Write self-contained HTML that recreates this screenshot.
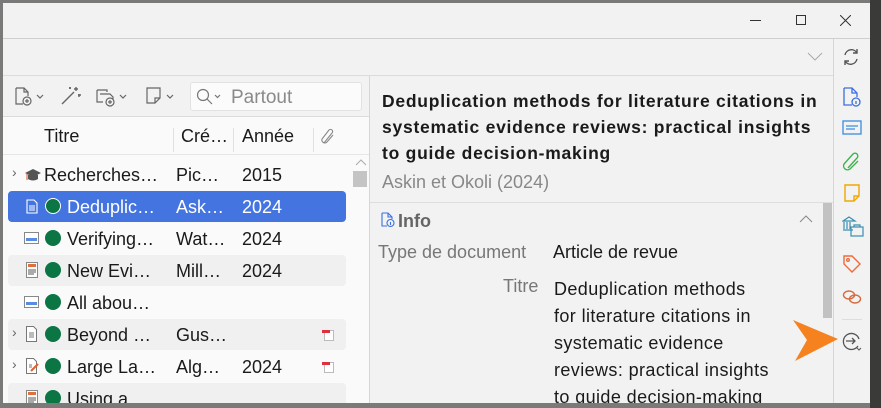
<!DOCTYPE html>
<html><head><meta charset="utf-8"><style>
*{margin:0;padding:0;box-sizing:border-box}
html,body{width:881px;height:408px;overflow:hidden}
body{background:#7a7a78;font-family:"Liberation Sans",sans-serif;position:relative}
.a{position:absolute}
.win{position:absolute;left:3px;top:3px;width:867px;height:400px;background:#f2f2f2}
.t{position:absolute;white-space:nowrap;font-size:18px;color:#1a1a1a}
.row{position:absolute;left:8px;width:338px;height:31px;border-radius:4px}
.dot{position:absolute;width:16px;height:16px;border-radius:50%;background:#0b7544}
</style></head><body>
<div class="win"></div>
<div class="a" style="left:750px;top:20px;width:11px;height:1px;background:#333"></div>
<div class="a" style="left:796px;top:15px;width:10px;height:10px;border:1px solid #333"></div>
<svg class="a" style="left:840px;top:15px" width="11" height="11"><path d="M0 0L11 11M11 0L0 11" stroke="#333" stroke-width="1"/></svg>
<div class="a" style="left:3px;top:38px;width:867px;height:1px;background:#cfcfcf"></div>
<div class="a" style="left:3px;top:75px;width:830px;height:1px;background:#dcdcdc"></div>
<svg class="a" style="left:807px;top:52px" width="16" height="10"><path d="M1 1L8 8L15 1" stroke="#aaa" fill="none"/></svg>
<div class="a" style="left:833px;top:39px;width:1px;height:364px;background:#d6d6d6"></div>
<svg class="a" style="left:841px;top:47px" width="20" height="20" fill="none" stroke="#555" stroke-width="1.4"><path d="M4 8a6.5 6.5 0 0 1 12-2M16 2v4h-4M16 12a6.5 6.5 0 0 1-12 2M4 18v-4h4"/></svg>
<svg class="a" style="left:843px;top:87px" width="18" height="20" fill="none" stroke="#3b6fe0" stroke-width="1.3"><path d="M1 1h8l5 5v4M1 1v17h8M9 1v5h5"/><circle cx="13" cy="15" r="4"/><path d="M13 14v3"/></svg>
<svg class="a" style="left:842px;top:120px" width="20" height="16" fill="none" stroke="#3b8be0" stroke-width="1.3"><rect x="1" y="1" width="18" height="13"/><path d="M4 6h12M4 9h9"/></svg>
<svg class="a" style="left:842px;top:152px" width="20" height="20" fill="none" stroke="#3fb34f" stroke-width="1.4"><path d="M6 16L15 6a2.5 2.5 0 0 0-4-4L2 12a4 4 0 0 0 6 5l8-8"/></svg>
<svg class="a" style="left:844px;top:184px" width="16" height="18" fill="none" stroke="#f0a800" stroke-width="1.4"><path d="M1 1h14v11l-5 5H1z"/><path d="M10 17v-5h5"/></svg>
<svg class="a" style="left:842px;top:215px" width="22" height="22" fill="none" stroke="#3a8fb0" stroke-width="1.2"><path d="M1 6l6-4 6 4zM2 7v7M5 7v7M8 7v7M1 15h10"/><rect x="9" y="12" width="12" height="9"/><path d="M12 12v-2h6v2"/></svg>
<svg class="a" style="left:842px;top:254px" width="20" height="20" fill="none" stroke="#ef6a3b" stroke-width="1.4"><path d="M2 2h8l8 8-8 8-8-8z"/><circle cx="6" cy="6" r="1.3"/></svg>
<svg class="a" style="left:842px;top:289px" width="20" height="16" fill="none" stroke="#d66a3e" stroke-width="1.4"><ellipse cx="7" cy="6" rx="5.5" ry="4"/><ellipse cx="13" cy="10" rx="5.5" ry="4"/></svg>
<div class="a" style="left:842px;top:319px;width:20px;height:1px;background:#ddd"></div>
<svg class="a" style="left:841px;top:330px" width="22" height="22" fill="none" stroke="#555" stroke-width="1.3"><path d="M17 16a8 8 0 1 1 1-7"/><path d="M5 11h9M11 8l3 3-3 3"/><path d="M16 18l2 2 2-2" stroke-width="1"/></svg>
<div class="a" style="left:369px;top:76px;width:1px;height:327px;background:#d6d6d6"></div>
<div class="a" style="left:3px;top:76px;width:366px;height:327px;background:#fafafa"></div>
<div class="a" style="left:3px;top:76px;width:366px;height:40px;background:#f2f2f2"></div>
<div class="a" style="left:3px;top:116px;width:366px;height:1px;background:#dcdcdc"></div>
<div class="a" style="left:3px;top:154px;width:366px;height:1px;background:#e6e6e6"></div>
<svg class="a" style="left:14px;top:86px" width="32" height="22" fill="none" stroke="#666" stroke-width="1.2"><path d="M2 2h8l4 4v4M2 2v16h7M10 2v4h4"/><circle cx="13" cy="15" r="4"/><path d="M13 13v4M11 15h4"/><path d="M23 9l3 3 3-3"/></svg>
<svg class="a" style="left:60px;top:85px" width="22" height="22" fill="none" stroke="#666" stroke-width="1.4"><path d="M2 19L14 7"/><path d="M16 2v4M14 4h4M19 9v3M18 10h3M10 2v2M9 3h2"/></svg>
<svg class="a" style="left:95px;top:86px" width="34" height="22" fill="none" stroke="#666" stroke-width="1.2"><path d="M2 4h10v2M2 4v12h6M5 8h10l3 3v2"/><circle cx="15" cy="16" r="4"/><path d="M15 14v4M13 16h4"/><path d="M25 9l3 3 3-3"/></svg>
<svg class="a" style="left:145px;top:86px" width="32" height="22" fill="none" stroke="#666" stroke-width="1.2"><path d="M2 2h13v10l-5 5H2z"/><path d="M10 17v-5h5"/><path d="M22 9l3 3 3-3"/></svg>
<div class="a" style="left:190px;top:82px;width:172px;height:29px;background:#fbfbfb;border:1px solid #e2e2e2;border-radius:3px"></div>
<svg class="a" style="left:196px;top:88px" width="28" height="18" fill="none" stroke="#777" stroke-width="1.2"><circle cx="7" cy="7" r="5.5"/><path d="M11 11l5 5M19 7l2.5 2.5 2.5-2.5"/></svg>
<div class="t" style="left:231px;top:87px;color:#8a8a8a;font-size:19px">Partout</div>
<div class="t" style="left:44px;top:126px">Titre</div>
<div class="a" style="left:173px;top:128px;width:1px;height:24px;background:#e0e0e0"></div>
<div class="t" style="left:181px;top:126px">Cré…</div>
<div class="a" style="left:233px;top:128px;width:1px;height:24px;background:#e0e0e0"></div>
<div class="t" style="left:242px;top:126px">Année</div>
<div class="a" style="left:313px;top:128px;width:1px;height:24px;background:#e0e0e0"></div>
<svg class="a" style="left:320px;top:128px" width="16" height="18" fill="none" stroke="#888" stroke-width="1.1"><path d="M4 15L12 5a2 2 0 0 0-3-3L2 11a3 3 0 0 0 5 3l6-7"/></svg>
<svg class="a" style="left:355px;top:158px" width="12" height="8"><path d="M1 7l5-5 5 5" stroke="#aaa" fill="none"/></svg>
<div class="a" style="left:353px;top:171px;width:14px;height:16px;background:#c4c4c4"></div>
<div class="row" style="top:191px;background:#4374e0"></div>
<div class="row" style="top:255px;background:#f0f0f0"></div>
<div class="row" style="top:319px;background:#f0f0f0"></div>
<div class="row" style="top:383px;background:#f0f0f0"></div>

<div class="t" style="left:12px;top:164px;color:#666;font-size:14px">›</div>
<svg class="a" style="left:24px;top:168px" width="18" height="14"><path d="M1 5L9 1l8 4-8 4z" fill="#555"/><path d="M4 7v4c3 2 7 2 10 0V7" fill="#555"/><path d="M3 6v6" stroke="#e05020"/></svg>
<div class="t" style="left:44px;top:165px">Recherches…</div><div class="t" style="left:176px;top:165px">Pic…</div><div class="t" style="left:242px;top:165px">2015</div>

<svg class="a" style="left:26px;top:199px" width="12" height="15" fill="none" stroke="#fff" stroke-width="1.1"><path d="M1 1h7l3 3v10H1zM3 7h6M3 9h6M3 11h6"/></svg>
<div class="dot" style="left:45px;top:198px;border:1.5px solid #fff"></div>
<div class="t" style="left:67px;top:197px;color:#fff">Deduplic…</div><div class="t" style="left:176px;top:197px;color:#fff">Ask…</div><div class="t" style="left:242px;top:197px;color:#fff">2024</div>

<svg class="a" style="left:24px;top:232px" width="15" height="12"><rect x=".5" y=".5" width="14" height="11" fill="#fff" stroke="#888"/><rect x="2" y="6" width="11" height="3" fill="#5a8be0"/></svg>
<div class="dot" style="left:45px;top:230px"></div>
<div class="t" style="left:67px;top:229px">Verifying…</div><div class="t" style="left:176px;top:229px">Wat…</div><div class="t" style="left:242px;top:229px">2024</div>

<svg class="a" style="left:26px;top:262px" width="12" height="16"><rect x=".5" y=".5" width="11" height="15" fill="#fff" stroke="#888"/><rect x="2" y="2" width="8" height="3" fill="#e07040"/><path d="M2 8h8M2 10h8M2 12h6" stroke="#555"/></svg>
<div class="dot" style="left:45px;top:262px"></div>
<div class="t" style="left:67px;top:261px">New Evi…</div><div class="t" style="left:176px;top:261px">Mill…</div><div class="t" style="left:242px;top:261px">2024</div>

<svg class="a" style="left:24px;top:296px" width="15" height="12"><rect x=".5" y=".5" width="14" height="11" fill="#fff" stroke="#888"/><rect x="2" y="6" width="11" height="3" fill="#5a8be0"/></svg>
<div class="dot" style="left:45px;top:294px"></div>
<div class="t" style="left:67px;top:293px">All abou…</div>

<div class="t" style="left:12px;top:324px;color:#666;font-size:14px">›</div>
<svg class="a" style="left:26px;top:326px" width="12" height="16" fill="#fff" stroke="#777" stroke-width="1"><path d="M.5.5h7l3 3v12H.5z"/><path d="M3 7h5M3 9h5M3 11h5" fill="none"/></svg>
<div class="dot" style="left:45px;top:326px"></div>
<div class="t" style="left:67px;top:325px">Beyond …</div><div class="t" style="left:176px;top:325px">Gus…</div>
<svg class="a" style="left:322px;top:328px" width="12" height="13"><rect x="2.5" y="2.5" width="9" height="10" fill="#fff" stroke="#bbb"/><rect x="0" y="2" width="8" height="3" fill="#e03040"/></svg>

<div class="t" style="left:12px;top:356px;color:#666;font-size:14px">›</div>
<svg class="a" style="left:26px;top:358px" width="13" height="16" fill="#fff" stroke="#777" stroke-width="1"><path d="M.5.5h7l3 3v12H.5z"/><path d="M3 7h3M3 9h3" fill="none"/><path d="M5 13l7-7" stroke="#e06030" stroke-width="2"/></svg>
<div class="dot" style="left:45px;top:358px"></div>
<div class="t" style="left:67px;top:357px">Large La…</div><div class="t" style="left:176px;top:357px">Alg…</div><div class="t" style="left:242px;top:357px">2024</div>
<svg class="a" style="left:322px;top:360px" width="12" height="13"><rect x="2.5" y="2.5" width="9" height="10" fill="#fff" stroke="#bbb"/><rect x="0" y="2" width="8" height="3" fill="#e03040"/></svg>

<svg class="a" style="left:26px;top:390px" width="12" height="16"><rect x=".5" y=".5" width="11" height="15" fill="#fff" stroke="#888"/><rect x="2" y="2" width="8" height="3" fill="#e07040"/><path d="M2 8h8M2 10h8M2 12h6" stroke="#555"/></svg>
<div class="dot" style="left:45px;top:390px"></div>
<div class="t" style="left:67px;top:389px">Using a …</div>

<div class="t" style="left:382px;top:88px;font-weight:bold;font-size:17.5px;line-height:26px;letter-spacing:0.75px">Deduplication methods for literature citations in<br>systematic evidence reviews: practical insights<br>to guide decision-making</div>
<div class="t" style="left:382px;top:172px;color:#888">Askin et Okoli (2024)</div>
<div class="a" style="left:370px;top:202px;width:463px;height:1px;background:#dedede"></div>
<div class="a" style="left:823px;top:203px;width:9px;height:115px;background:#c2c2c2"></div>
<svg class="a" style="left:381px;top:212px" width="14" height="16" fill="none" stroke="#3b6fe0" stroke-width="1.1"><path d="M1 1h6l4 4v2M1 1v13h5M7 1v4h4"/><circle cx="9.5" cy="11" r="3.5"/><path d="M9.5 10v3"/></svg>
<div class="t" style="left:398px;top:211px;font-weight:bold;color:#666">Info</div>
<svg class="a" style="left:799px;top:215px" width="14" height="8"><path d="M1 7l6-6 6 6" stroke="#888" fill="none"/></svg>
<div class="t" style="left:378px;top:242px;color:#777">Type de document</div>
<div class="t" style="left:553px;top:242px">Article de revue</div>
<div class="t" style="left:503px;top:276px;color:#777">Titre</div>
<div class="t" style="left:554px;top:276px;line-height:27px;letter-spacing:0.4px">Deduplication methods<br>for literature citations in<br>systematic evidence<br>reviews: practical insights<br>to guide decision-making</div>
<div class="a" style="left:0;top:403px;width:881px;height:5px;background:#7a7a78"></div>
<div class="a" style="left:870px;top:0;width:11px;height:408px;background:#3a3a38"></div>
<svg class="a" style="left:793px;top:320px" width="45" height="42"><path d="M0 0L45 19L2 41L14 20z" fill="#f5821f"/></svg>
</body></html>
